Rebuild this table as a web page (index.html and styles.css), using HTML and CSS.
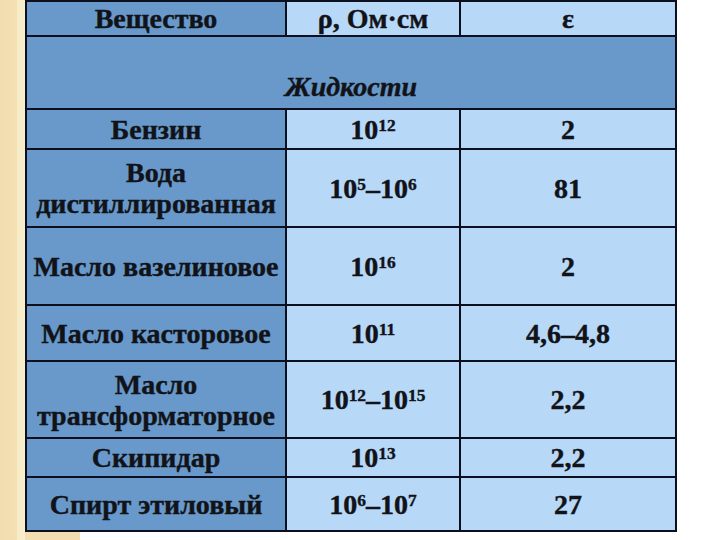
FILE: index.html
```html
<!DOCTYPE html>
<html>
<head>
<meta charset="utf-8">
<title>Table</title>
<link rel="stylesheet" href="styles.css">
</head>
<body>
<div class="page">
  <div class="grid">
    <div class="cell dark"><span>Вещество</span></div>
    <div class="cell light"><span>ρ, Ом·см</span></div>
    <div class="cell light"><span>ε</span></div>

    <div class="cell dark section"><span>Жидкости</span></div>

    <div class="cell dark"><span>Бензин</span></div>
    <div class="cell light"><span>10<sup>12</sup></span></div>
    <div class="cell light"><span>2</span></div>

    <div class="cell dark"><span>Вода<br>дистиллированная</span></div>
    <div class="cell light"><span>10<sup>5</sup>–10<sup>6</sup></span></div>
    <div class="cell light"><span>81</span></div>

    <div class="cell dark"><span>Масло вазелиновое</span></div>
    <div class="cell light"><span>10<sup>16</sup></span></div>
    <div class="cell light"><span>2</span></div>

    <div class="cell dark"><span>Масло касторовое</span></div>
    <div class="cell light"><span>10<sup>11</sup></span></div>
    <div class="cell light"><span>4,6–4,8</span></div>

    <div class="cell dark"><span>Масло<br>трансформаторное</span></div>
    <div class="cell light"><span>10<sup>12</sup>–10<sup>15</sup></span></div>
    <div class="cell light"><span>2,2</span></div>

    <div class="cell dark"><span>Скипидар</span></div>
    <div class="cell light"><span>10<sup>13</sup></span></div>
    <div class="cell light"><span>2,2</span></div>

    <div class="cell dark"><span>Спирт этиловый</span></div>
    <div class="cell light"><span>10<sup>6</sup>–10<sup>7</sup></span></div>
    <div class="cell light"><span>27</span></div>
  </div>
</div>
</body>
</html>
```
FILE: styles.css
```css
html, body {
  margin: 0;
  padding: 0;
}
body {
  width: 720px;
  height: 540px;
  overflow: hidden;
  background-color: #ffffff;
  background-image: linear-gradient(to right,
      #f1ddae 0px, #f3e0b3 17px, #f8ebc6 17px, #f9efcc 25px,
      #f2deb0 25px, #f2deb0 80px, #ffffff 80px);
}
.page {
  padding-left: 25px;
}
.grid {
  width: 652px;
  box-sizing: border-box;
  display: grid;
  grid-template-columns: 258px 172px 214px;
  grid-template-rows: 33px 71px 38px 76px 76px 54px 75px 37px 52px;
  gap: 2px;
  padding: 2px;
  background: #0c0f1e;
}
.cell {
  display: flex;
  align-items: center;
  justify-content: center;
  text-align: center;
  font-family: "Liberation Serif", Tinos, "Times New Roman", serif;
  font-weight: bold;
  font-size: 28px;
  line-height: 31px;
  color: #111318;
  -webkit-text-stroke: 0.4px #111318;
}
.dark { background: #6899ca; }
.light { background: #b8d8f8; }
.section {
  grid-column: 1 / -1;
  align-items: flex-end;
  padding-bottom: 6px;
  font-style: italic;
}
sup {
  font-size: 0.62em;
  line-height: 0;
  vertical-align: 0.45em;
}
```
